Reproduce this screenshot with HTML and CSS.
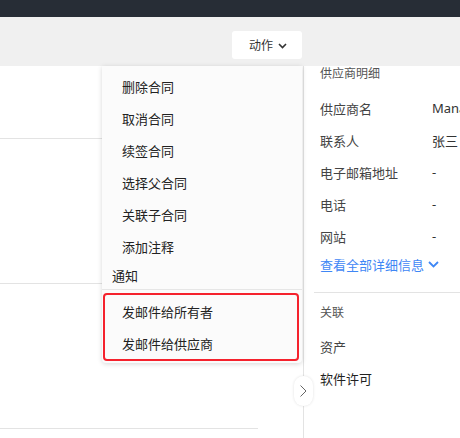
FILE: index.html
```html
<!DOCTYPE html>
<html lang="zh-CN">
<head>
<meta charset="utf-8">
<link rel="stylesheet" href="styles.css">
</head>
<body>
<div class="topbar"></div>
<div class="toolbar">
  <div class="toolbar-left">
    <button class="action-btn">动作
      <svg class="chev" width="9" height="6" viewBox="0 0 9 6"><path d="M1 1l3.5 3.5L8 1" fill="none" stroke="#333" stroke-width="1.6"/></svg>
    </button>
  </div>
</div>
<div class="main">
  <div class="left">
    <div class="block b1"></div>
    <div class="block"></div>
    <div class="block"></div>
  </div>
  <div class="right">
    <div class="r-title">供应商明细</div>
    <div class="r-row"><span class="r-label">供应商名</span><span class="r-val">Mana</span></div>
    <div class="r-row"><span class="r-label">联系人</span><span class="r-val">张三</span></div>
    <div class="r-row"><span class="r-label">电子邮箱地址</span><span class="r-val">-</span></div>
    <div class="r-row"><span class="r-label">电话</span><span class="r-val">-</span></div>
    <div class="r-row"><span class="r-label">网站</span><span class="r-val">-</span></div>
    <div class="r-link">查看全部详细信息
      <svg width="11" height="7" viewBox="0 0 11 7"><path d="M1 1l4.5 4.5L10 1" fill="none" stroke="#3f87f5" stroke-width="1.8"/></svg>
    </div>
    <div class="r-divider"></div>
    <div class="r-sub">关联</div>
    <div class="r-item">资产</div>
    <div class="r-item strong">软件许可</div>
  </div>
  <div class="collapse">
    <svg width="9" height="14" viewBox="0 0 9 14"><path d="M1.5 1.5L7 7l-5.5 5.5" fill="none" stroke="#666" stroke-width="1"/></svg>
  </div>
  <div class="dropdown">
    <div class="d-item">删除合同</div>
    <div class="d-item">取消合同</div>
    <div class="d-item">续签合同</div>
    <div class="d-item">选择父合同</div>
    <div class="d-item">关联子合同</div>
    <div class="d-item">添加注释</div>
    <div class="d-header">通知</div>
    <div class="d-sep"></div>
    <div class="d-highlight">
      <div class="d-item in">发邮件给所有者</div>
      <div class="d-item in">发邮件给供应商</div>
    </div>
  </div>
</div>
</body>
</html>
```
FILE: styles.css
```css
* { box-sizing: border-box; }
html, body { margin: 0; padding: 0; }
body {
  width: 460px;
  height: 438px;
  overflow: hidden;
  background: #ffffff;
  font-family: "Noto Sans", "Noto Sans CJK SC", sans-serif;
  color: #333;
}
.topbar {
  height: 17px;
  background: #272d36;
}
.toolbar {
  height: 49px;
  background: #f0f0f0;
  display: flex;
}
.toolbar-left {
  width: 302px;
  flex-shrink: 0;
  display: flex;
  justify-content: flex-end;
  align-items: flex-start;
  padding-top: 14px;
}
.action-btn {
  width: 70px;
  height: 28px;
  border: none;
  background: #fff;
  border-radius: 3px;
  font-family: inherit;
  font-size: 12px;
  color: #333;
  display: flex;
  align-items: center;
  justify-content: center;
  gap: 5px;
  padding: 0 0 0 2px;
}
.chev { margin-top: 1px; }
.main {
  position: relative;
  display: flex;
  height: 372px;
}
.left {
  width: 303px;
  flex-shrink: 0;
  background: #fff;
  padding-right: 45px;
}
.block {
  height: 145px;
  border-bottom: 1px solid #e3e3e3;
}
.block.b1 { height: 73px; }
.right {
  flex: 1;
  min-width: 0;
  overflow: hidden;
  border-left: 1px solid #e3e3e3;
  padding-left: 16px;
  background: #fff;
}
.r-title {
  font-size: 12px;
  line-height: 16px;
  color: #555;
  margin-bottom: 10px;
}
.r-row {
  height: 32px;
  display: flex;
  align-items: center;
  font-size: 13px;
}
.r-label {
  width: 112px;
  flex-shrink: 0;
  color: #444;
}
.r-val { color: #333; white-space: nowrap; }
.r-link {
  height: 24px;
  display: flex;
  align-items: center;
  gap: 4px;
  font-size: 13px;
  color: #3f87f5;
  white-space: nowrap;
}
.r-divider {
  height: 1px;
  background: #e3e3e3;
  margin: 16px 0 0 -6px;
}
.r-sub {
  font-size: 12px;
  color: #555;
  height: 37px;
  display: flex;
  align-items: center;
}
.r-item {
  font-size: 13px;
  color: #444;
  height: 32px;
  display: flex;
  align-items: center;
}
.r-item.strong { color: #222; }
.collapse {
  position: absolute;
  left: 294px;
  top: 310px;
  width: 19px;
  height: 30px;
  background: #fff;
  border-radius: 10px;
  box-shadow: 0 0 3px rgba(0,0,0,0.12);
  display: flex;
  align-items: center;
  justify-content: center;
}
.dropdown {
  position: absolute;
  left: 102px;
  top: 0;
  width: 200px;
  background: #fbfbfb;
  border-radius: 0 0 4px 4px;
  box-shadow: 0 1px 5px rgba(0,0,0,0.16);
  padding: 4px 0 2px;
}
.d-item {
  height: 32px;
  display: flex;
  align-items: center;
  padding-left: 20px;
  font-size: 13px;
  color: #222;
}
.d-header {
  height: 27px;
  display: flex;
  align-items: center;
  padding-left: 10px;
  font-size: 13px;
  color: #222;
}
.d-sep {
  height: 1px;
  background: #e6e6e6;
  margin-bottom: 3px;
}
.d-highlight {
  margin: 0 3px 0 1px;
  border: 2px solid #f5222d;
  border-radius: 4px;
}
.d-item.in { padding-left: 17px; }
```
